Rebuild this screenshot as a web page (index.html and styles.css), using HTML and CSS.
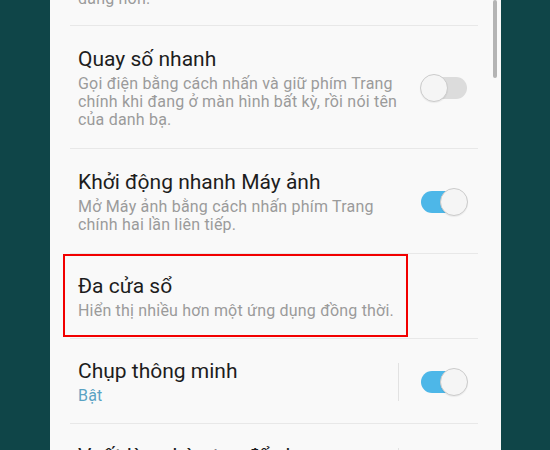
FILE: index.html
```html
<!DOCTYPE html>
<html lang="vi">
<head>
<meta charset="utf-8">
<title>Cài đặt</title>
<link rel="stylesheet" href="styles.css">
</head>
<body>
<div class="panel">
  <div class="scrollbar"></div>
  <div class="list">
    <div class="tail">dàng hơn.</div>

    <div class="row">
      <div class="text">
        <div class="title">Quay số nhanh</div>
        <div class="sub">Gọi điện bằng cách nhấn và giữ phím Trang<br>chính khi đang ở màn hình bất kỳ, rồi nói tên<br>của danh bạ.</div>
      </div>
      <div class="switch off"><span class="track"></span><span class="knob"></span></div>
    </div>

    <div class="row">
      <div class="text">
        <div class="title">Khởi động nhanh Máy ảnh</div>
        <div class="sub">Mở Máy ảnh bằng cách nhấn phím Trang<br>chính hai lần liên tiếp.</div>
      </div>
      <div class="switch on"><span class="track"></span><span class="knob"></span></div>
    </div>

    <div class="row single">
      <div class="highlight"></div>
      <div class="text">
        <div class="title">Đa cửa sổ</div>
        <div class="sub">Hiển thị nhiều hơn một ứng dụng đồng thời.</div>
      </div>
    </div>

    <div class="row single">
      <div class="text">
        <div class="title">Chụp thông minh</div>
        <div class="sub status">Bật</div>
      </div>
      <div class="sep"></div>
      <div class="switch on"><span class="track"></span><span class="knob"></span></div>
    </div>

    <div class="row single">
      <div class="text">
        <div class="title">Vuốt lòng bàn tay để chụp</div>
        <div class="sub status">Bật</div>
      </div>
      <div class="sep"></div>
      <div class="switch on"><span class="track"></span><span class="knob"></span></div>
    </div>
  </div>
</div>
</body>
</html>
```

FILE: styles.css
```css
html, body {
  margin: 0;
  padding: 0;
}
body {
  background: #0f4548;
  font-family: Roboto, "Noto Sans", "Liberation Sans", sans-serif;
  width: 550px;
  height: 450px;
  overflow: hidden;
}
.panel {
  position: relative;
  margin-left: 50px;
  width: 451px;
  height: 450px;
  overflow: hidden;
  background: #f9f9f9;
}
.scrollbar {
  position: absolute;
  left: 443px;
  top: 0;
  width: 4px;
  height: 78px;
  border-radius: 2px;
  background: #b4b4b4;
}
.list {
  margin: 0 23px 0 20px;
}
.tail {
  margin-top: -10px;
  padding: 0 0 17px 8px;
  font-size: 16px;
  line-height: 18px;
  letter-spacing: 0.2px;
  color: #9b9b9b;
}
.row {
  position: relative;
  display: flex;
  align-items: center;
  border-top: 1px solid #e8e8e8;
  padding: 20px 10px 19px 8px;
}
.row.single {
  padding-top: 19px;
  padding-bottom: 18px;
}
.text {
  flex: 1;
}
.title {
  font-size: 21px;
  line-height: 26px;
  color: #1d1d1d;
  margin-bottom: 3px;
}
.sub {
  font-size: 16px;
  line-height: 18px;
  letter-spacing: 0.2px;
  color: #9b9b9b;
}
.sub.status {
  color: #5aa2c3;
}
.highlight {
  position: absolute;
  left: -7px;
  top: 0;
  bottom: 1px;
  width: 341px;
  border: 2px solid #f20000;
}
.sep {
  width: 1px;
  height: 38px;
  background: #e2e2e2;
  margin-right: 21px;
}
.switch {
  position: relative;
  width: 48px;
  height: 28px;
  flex: none;
}
.track {
  position: absolute;
  left: 1px;
  top: 3px;
  width: 46px;
  height: 22px;
  border-radius: 11px;
  background: #dcdcdc;
}
.knob {
  position: absolute;
  top: 0;
  left: 0;
  width: 26px;
  height: 26px;
  border-radius: 50%;
  border: 1px solid #cbcbcb;
  background: #f5f5f5;
  box-shadow: 0 1px 1px rgba(0, 0, 0, 0.06);
}
.switch.on .track {
  background: #4db7e8;
}
.switch.on .knob {
  left: 20px;
}
```
